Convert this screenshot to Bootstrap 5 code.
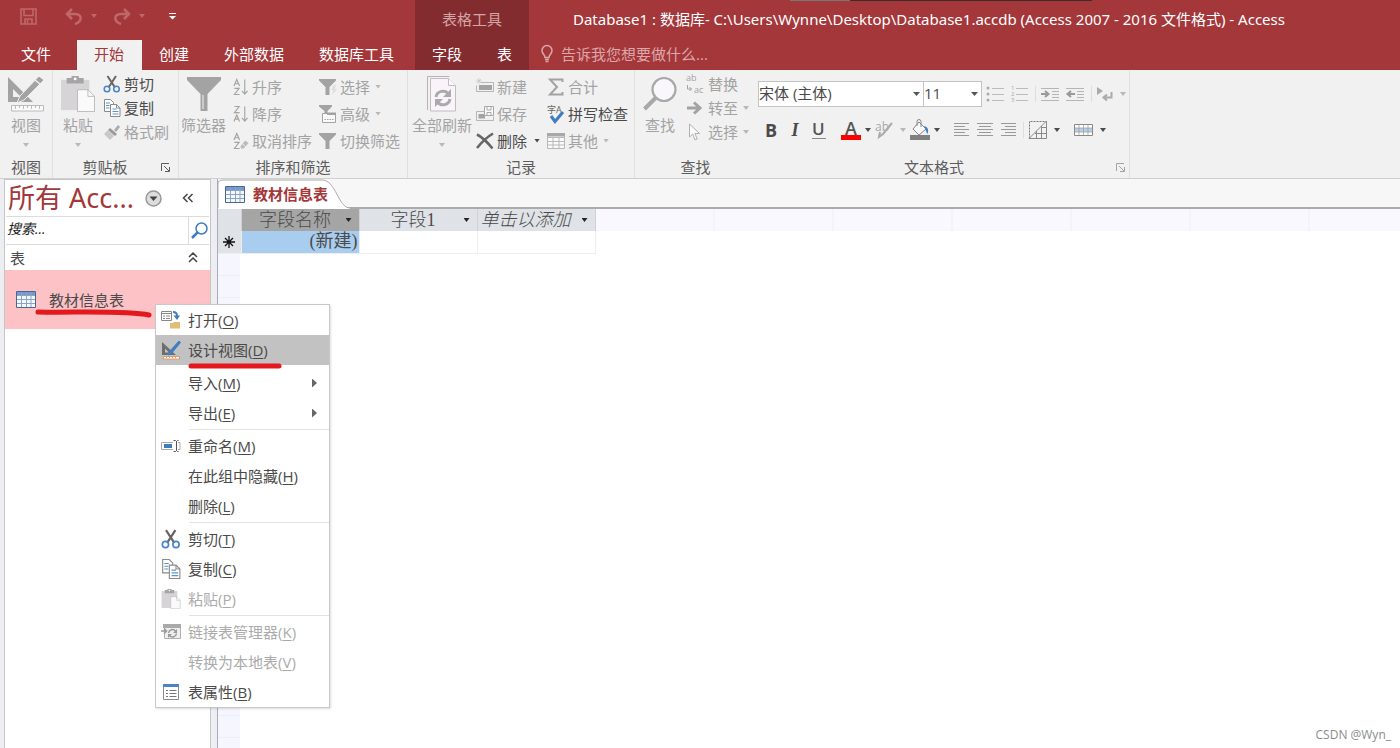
<!DOCTYPE html>
<html lang="zh-CN">
<head>
<meta charset="utf-8">
<meta name="viewport" content="width=device-width, initial-scale=1">
<title>Database1 - Access</title>
<link href="https://cdn.jsdelivr.net/npm/bootstrap@5.3.0/dist/css/bootstrap.min.css" rel="stylesheet">
<style>
:root{--brand:#a4373a;--ink:#4a4a4a;--muted:#a3a3a3;--line:#dcdcdc}
body{font-family:"Open Sans","Noto Sans CJK SC",sans-serif;font-size:15px;line-height:20px;color:var(--ink);background:#fff}
button{background:none;border:0;padding:0;color:inherit;line-height:20px;white-space:nowrap}
svg{display:block;flex:none;overflow:visible}
/* title bar */
.titlebar{background:var(--brand);color:#fff}
.qat,.title-row{height:40px}
.title-row{padding-bottom:2px}
.tabs-row{height:30px}
.left-head{width:415px}
.qat{padding:0 0 8px 20px;color:#c0676a}
.qmore{margin-left:20px;color:#fff}
.tab-link{color:#fff;text-decoration:none;height:30px;padding:4px 18px 6px 17px;white-space:nowrap}
.tab-link.current{background:#f1f1f1;color:var(--brand)}
.context-head{width:114px;background:#832c2f;color:#d4a4a6}
.title-text{font-family:"Noto Sans","Noto Sans CJK SC",sans-serif;padding-left:44px}
.tell{color:#dba7a9;padding-bottom:2px}
.top-edge{height:1px;width:302px;left:790px;background:linear-gradient(90deg,#777 20%,#3c2c2c 20%)}
/* ribbon */
.ribbon{background:#f1f1f1;border-bottom:1px solid #cfcfcf;height:109px}
.rgroup{border-right:1px solid #e0e0e0;color:var(--ink)}
.rbody{height:87px;padding-top:2px}
.rlabel{height:20px;color:#5c5c5c}
.off{color:var(--muted)}
.off .caret{color:#b8b8b8}
.big-btn{padding-top:4px}
.big-btn svg.ico{height:36px}
.big-btn span{margin-top:3px}
.toolcol>button{display:flex;align-items:center;gap:3px}
.toolcol .caret{margin-left:2px}
.r24>button{height:24px}
.r27{padding-top:1px}
.r27>button{height:27px}
.caret{width:6px;height:4px;background:currentColor;clip-path:polygon(0 0,100% 0,50% 100%);flex:none;display:inline-block}
.w-view{width:53px}.w-clip{width:126px}.w-sort{width:229px}.w-rec{width:227px}.w-find{width:121px}.w-text{width:374px}
.w-sort .rbody{padding-left:2px;gap:7px}
.w-text .rbody{padding-top:11px}
.combo{appearance:none;height:26px;border:1px solid #c4c4c4;border-radius:0;color:var(--ink);padding:0 2px 2px 0;line-height:20px;
background:#fff url("data:image/svg+xml,%3Csvg xmlns='http://www.w3.org/2000/svg' width='7' height='4'%3E%3Cpath d='M0 0h7L3.5 4z' fill='%23555'/%3E%3C/svg%3E") no-repeat right 3px center}
.combo-font{width:166px;margin-left:2px}.combo-size{width:59px;margin-left:-1px}
.vr-lite{width:1px;height:16px;background:#dedede;margin:0 5px 0 7px}
.gap-s{gap:7px}
.ml-s{margin-left:7px}
.ml-l{margin-left:14px}
.row-two{padding-left:7px}
.fmt{font-weight:700;font-size:18px;width:16px}
/* navigation pane */
.workspace{background:#eceef1}
.navpane{width:207px;margin-left:4px;background:#fff;border:1px solid #c6c6c6;border-width:1px 1px 0 1px}
.nav-title{height:36px;padding-left:3px}
.nav-title h1{font-family:"Noto Sans","Noto Sans CJK SC",sans-serif;font-size:27px;line-height:36px;color:var(--brand);font-weight:400}
.searchrow{height:29px;border-top:1px solid var(--line);border-bottom:1px solid var(--line);margin:0 1px}
.searchrow input{border:0;outline:0;background:none;font-style:italic;font-size:14px;padding:0 0 4px 1px;width:182px}
.searchrow input::placeholder{color:#222;opacity:1}
.searchrow button{width:21px;border-left:1px solid var(--line)}
.nav-group{height:25px;padding:0 12px 0 5px}
.nav-item-row{height:59px;background:#fcc2c5}
.nav-item-row a{color:var(--ink);text-decoration:none;padding-left:11px;height:59px;gap:13px}
.stroke-a{left:30px;top:38px}
.stroke-b{left:32px;top:28px}
/* context menu */
.ctx{left:150px;top:34px;width:175px;background:#fff;border:1px solid #c8c8c8;box-shadow:1px 1px 2px #0002;z-index:5}
.ctx button{display:flex;align-items:center;height:30px;width:100%;padding-left:5px;text-align:left}
.ctx svg.ico{width:20px;height:20px;margin-right:7px}
.ctx .noico{padding-left:32px}
.ctx .hot{background:#c2c2c2}
.ctx .rule{height:3px;padding-top:1px}
.ctx .rule.line::before{content:"";display:block;height:1px;background:#e2e2e2;margin-left:33px}
.ctx .disabled-item{color:#ababab}
.ctx u{text-underline-offset:2px}
.sub{width:5px;height:9px;background:#666;clip-path:polygon(0 0,100% 50%,0 100%);margin-left:auto;margin-right:12px}
/* document area */
.doc{margin-left:6px;border-left:1px solid #aab;background:#fff}
.tabstrip{height:30px;background:#f7f7f7;border-bottom:2px solid #ababab}
.doctab{height:30px;width:130px;color:var(--brand);font-weight:700}
.doctab .shape{left:0;top:0}
.sheet{font-family:"Liberation Serif","Noto Sans CJK SC",serif;font-size:18px;line-height:22px;table-layout:fixed;width:100%;color:#4a4a4a}
.sheet th{font-weight:300;height:22px;padding:0;background:#dfe2e6;border-right:1px solid #d0d0d6;white-space:nowrap}
.sheet td{height:22px;padding:0;border-right:1px solid #eee;border-bottom:1px solid #eee;line-height:21px}
.sheet .c-sel{width:23px}.sheet .c-data{width:118px}
.sheet .selcol{background:#a5a5a5}
.sheet .newcell{background:#a9cdee;text-align:right;padding-right:1px}
.sheet .rowsel{background:#dfe2e6;color:#111;text-align:center}
.sheet th.filler{background:repeating-linear-gradient(90deg,#f8f8fe 0 118px,#eeeef6 118px 119px);border:0}
.sheet td.filler{border:0}
.hcell{padding:0 7px 0 3px}
.gutter{width:22px;background:repeating-linear-gradient(#f6f7fe 0 21px,#eceef8 21px 22px)}
.credit{right:9px;bottom:3px;font-size:12px;color:#8c8c8c}
</style>
</head>
<body class="d-flex flex-column min-vh-100 position-relative">

<svg width="0" height="0" class="position-absolute" aria-hidden="true">
  <defs>
    <symbol id="i-scissors" viewBox="0 0 18 18"><path d="M4.500 1 L12 12.500 M13 1 L5.500 12.500" stroke="#666" stroke-width="2" fill="none"/><g fill="none" stroke="#4a86c5" stroke-width="1.500"><circle cx="4" cy="14" r="2.800"/><circle cx="13.500" cy="14" r="2.800"/></g></symbol>
    <symbol id="i-copy" viewBox="0 0 18 18"><g fill="#fff" stroke="#8a8a8a"><path d="M1.500.5h6l3 3v9h-9z"/><path d="M7.500 5.500h6l3.500 3.500v8.500h-9.500z"/><path d="M13.500 5.500v3.500h3.500" fill="none"/></g><path d="M3 4h4M3 6.500h3.500M3 9h3.500M9.500 10h4M9.500 12.500h6M9.500 15h6" stroke="#5b95cc"/></symbol>
    <symbol id="i-pasteoff" viewBox="0 0 36 38"><path d="M0 4h30v32H0z" fill="#d6d4d6"/><path d="M6 2h5a4 4 0 0 1 8 0h5v6H6z" fill="#a5a5a5"/><circle cx="15" cy="3" r="1.500" fill="#fff"/><path d="M17.500 14.500h11l7 7v16h-18z" fill="#fafafa" stroke="#b9b9b9"/><path d="M28.500 14.500v7h7" fill="none" stroke="#b9b9b9"/></symbol>
    <symbol id="i-design" viewBox="0 0 36 36"><path d="M0 1 L25 26 H0z M5 13v8h8z" fill="currentColor" fill-rule="evenodd"/><path d="M31 0l5 4-20 20-7 3 3-7z" fill="currentColor" stroke="#f1f1f1" stroke-width="1"/><path d="M27 4l5 4" stroke="#f1f1f1" stroke-width="1.500"/><path d="M3.500 29.500h32v5.500h-32z" fill="#fafafa" stroke="#bbb"/><path d="M7.500 30v3M11.500 30v2M15.500 30v3M19.500 30v2M23.500 30v3M27.500 30v2M31.500 30v3" stroke="#bbb"/></symbol>
    <symbol id="i-design-c" viewBox="0 0 20 20"><path d="M1 2l14 13H1z M4 8.500v4h4z" fill="#6e6e6e" fill-rule="evenodd"/><path d="M18 1l1.500 1.500L10 14l-3 1 1-3z" fill="#3f7fc0" stroke="#3f7fc0"/><path d="M2.500 16.500h16v2.500h-16z" fill="#fff" stroke="#dd9d6b"/><path d="M5.500 17v1M8.500 17v1M11.500 17v1M14.500 17v1" stroke="#dd9d6b"/></symbol>
    <symbol id="i-funnel" viewBox="0 0 34 34"><path d="M0 0h34v3L20.500 17v17h-7V17L0 3z" fill="currentColor"/><path d="M16 18v14" stroke="#ccc" stroke-width="2"/></symbol>
    <symbol id="i-az" viewBox="0 0 17 18"><g stroke="currentColor" fill="none" stroke-width="1.200"><path d="M1 8 L4 1 L7 8 M2 5.500h4M1.500 10.500h5L1.500 17h5.500"/><path d="M12.500 1v15M9.500 13l3 3.500 3-3.500"/></g></symbol>
    <symbol id="i-za" viewBox="0 0 17 18"><g stroke="currentColor" fill="none" stroke-width="1.200"><path d="M1.500 1h5L1.500 7.500h5.500M1 17l3-7 3 7M2 14.500h4"/><path d="M12.500 1v15M9.500 13l3 3.500 3-3.500"/></g></symbol>
    <symbol id="i-azclear" viewBox="0 0 17 18"><path d="M1 8 L4 1 L7 8 M2 5.500h4M1.500 10.500h5L1.500 17h5.500" stroke="currentColor" fill="none" stroke-width="1.200"/><path d="M13 8.500l3.500 2.500-5 6H8.500l-.5-2.500z" fill="#bbb"/><path d="M10 12l3.500 3" stroke="#f1f1f1"/></symbol>
    <symbol id="i-fsel" viewBox="0 0 18 18"><path d="M0 1h17v1.500L10.500 9v8h-4V9L0 2.500z" fill="currentColor"/><path d="M15 7l-3 5h2.500L13 17l5-6h-2.500L17 7z" fill="#ddd"/></symbol>
    <symbol id="i-fadv" viewBox="0 0 18 18"><path d="M0 0h13v1.500L8.500 6v4h-3V6L0 1.500z" fill="currentColor"/><path d="M3.500 8.500h13v9h-13z" fill="#fafafa" stroke="currentColor"/><path d="M8 7.500h9V10H8z" fill="currentColor"/><path d="M5.500 14.500h9" stroke="currentColor" stroke-dasharray="1.500 1"/></symbol>
    <symbol id="i-ftog" viewBox="0 0 18 18"><path d="M0 1h17v1.500L10.500 9v8h-4V9L0 2.500z" fill="currentColor"/></symbol>
    <symbol id="i-refresh" viewBox="0 0 30 36"><path d="M.5 34V.5h22" fill="none" stroke="#b5b5b5"/><path d="M3.500 2.500h18l7 7v25.500h-25z" fill="#faf4fa" stroke="#c0bcc0"/><path d="M21.500 2.500v7h7" fill="#fff" stroke="#c0bcc0"/><path d="M9 21a7 7 0 0 1 12.500-3M23 23a7 7 0 0 1-12.500 3" fill="none" stroke="#aaa" stroke-width="3"/><path d="M24 13v8h-8zM8 31v-8h8z" fill="#aaa"/></symbol>
    <symbol id="i-new" viewBox="0 0 18 18"><path d="M5 4.500h12.500v9H.5v-6" fill="none" stroke="#b5b5b5"/><path d="M3 7h13v5H3z" fill="#a3a3a3"/><path d="M3 0v6M0 3h6M1 1l4 4M5 1L1 5" stroke="#c4c4c4" stroke-width=".7"/></symbol>
    <symbol id="i-saverec" viewBox="0 0 18 18"><path d="M9 6.500H.5v9h17v-4" fill="none" stroke="#b5b5b5"/><path d="M2.500 9H9v4.500H2.500z" fill="#a3a3a3"/><path d="M8.500 1.500h9v9h-9z" fill="#fafafa" stroke="#a8a8a8"/><path d="M11 2v3h4V2M11 10V7.500h4V10" stroke="#a8a8a8" fill="none"/></symbol>
    <symbol id="i-x" viewBox="0 0 18 18"><path d="M1 2.500C6 5 12 11 16.500 16.500M17 1.500C11 5 5 11 1 16" stroke="#666" stroke-width="2.600" fill="none"/></symbol>
    <symbol id="i-sigma" viewBox="0 0 18 18"><path d="M15.500 4V1.500H3L10 9l-7 7.500h12.500V14" fill="none" stroke="#a3a3a3" stroke-width="2"/></symbol>
    <symbol id="i-othertab" viewBox="0 0 18 18"><path d="M.5 1.500h17v15H.5zM.5 5.500h17M.5 9.500h17M.5 13h17M6 5v11.500M12 5v11.500" fill="#fafafa" stroke="#b9b9b9"/><path d="M0 1h18v3.500H0z" fill="#a8a8a8"/></symbol>
    <symbol id="i-check" viewBox="0 0 18 20"><path d="M4 12l4 5.500L16 8" stroke="#3f7dbd" stroke-width="3" fill="none"/></symbol>
    <symbol id="i-mag" viewBox="0 0 34 34"><circle cx="21" cy="12.500" r="11.500" fill="#faf7fc" stroke="#a8a8a8" stroke-width="2.200"/><path d="M12.500 21L1.500 32" stroke="#a8a8a8" stroke-width="4"/></symbol>
    <symbol id="i-goto" viewBox="0 0 20 18"><path d="M2 9h12M9 3.500L15 9l-6 5.500" stroke="#a3a3a3" stroke-width="3" fill="none"/></symbol>
    <symbol id="i-cursor" viewBox="0 0 20 18"><path d="M4.500 1v13l3.200-3 2.300 6 2.300-1-2.400-5.500h4.600z" fill="#fafafa" stroke="#b0b0b0"/></symbol>
    <symbol id="i-brush" viewBox="0 0 18 18"><path d="M15 2l2 2-4 5-2-2z" fill="#aaa"/><path d="M7 5l7 6-2 2-7-6z" fill="#999"/><path d="M5 7l6 6-4 4-6-6z" fill="#c9c9c9"/></symbol>
    <symbol id="i-table" viewBox="0 0 20 17"><path d="M.5.500h19v16H.5z" fill="#f4f8fc" stroke="#4a6692"/><path d="M1 1h18v3H1z" fill="#7799cd"/><path d="M5.500 1v15M10.500 1v15M15 1v15M1 4.500h18M1 8.500h18M1 12.500h18" stroke="#8aa5c4"/></symbol>
    <symbol id="i-open" viewBox="0 0 20 20"><path d="M.5 1.500h10v9H.5z" fill="#fff" stroke="#888"/><path d="M.5 3.500h10M2 6h2M5 6h4M2 8.500h2M5 8.500h4" stroke="#888"/><path d="M12 2c3 0 4 2 4 4" fill="none" stroke="#3f7dbd" stroke-width="2"/><path d="M12.500 5.500H19L16 10z" fill="#3f7dbd"/><path d="M9 13h3l1-1h6v6.500H9z" fill="#e0be78"/></symbol>
    <symbol id="i-rename" viewBox="0 0 20 20"><path d="M12 6.500H.5v7H12M17 6.500h2v7h-2" fill="none" stroke="#aaa"/><path d="M3 8h8v4H3z" fill="#3f7dbd"/><path d="M12.500 4.500h2l1 1 1-1h1M12.500 15.500h2l1-1 1 1h1M15.500 5v10" stroke="#555" fill="none"/></symbol>
    <symbol id="i-linkmgr" viewBox="0 0 20 20"><path d="M3.500 3.500h16v13h-16z" fill="#eee" stroke="#b0b0b0"/><path d="M2 2h18v4H2z" fill="#aaa"/><path d="M0 9h5M3 6.500L5.500 9 3 11.500" stroke="#999" fill="none" stroke-width="1.500"/><path d="M7.500 11a4 4 0 0 1 7-2M15.500 11.500a4 4 0 0 1-7 2" stroke="#999" fill="none" stroke-width="1.500"/><path d="M16 7v4h-4zM7 16v-4h4z" fill="#999"/></symbol>
    <symbol id="i-props" viewBox="0 0 20 20"><path d="M2.500 2.500h15v15h-15z" fill="#fff" stroke="#8a8a8a"/><path d="M2 2h16v3H2z" fill="#4a86c5"/><path d="M5 8.500h2M5 11.500h2M5 14.500h2M8.500 8.500h7M8.500 11.500h7M8.500 14.500h7" stroke="#777"/></symbol>
    <symbol id="i-launch" viewBox="0 0 9 9"><path d="M.5 8V.5H8M3 3l5 5M8.500 4v4.500H4" fill="none" stroke="currentColor"/></symbol>
  </defs>
</svg>

<header class="titlebar d-flex position-relative">
  <div class="top-edge position-absolute"></div>
  <div class="left-head flex-shrink-0">
    <div class="qat d-flex align-items-center">
      <button type="button" aria-label="保存"><svg width="17" height="17" viewBox="0 0 17 17"><path d="M1 1h15v15H1zM4 1v6.500h9V1M5 16v-5h7v5M7.500 12v3" fill="none" stroke="currentColor" stroke-width="1.600"/></svg></button>
      <button type="button" class="d-flex align-items-center gap-2 ms-4 ps-1" aria-label="撤消"><svg width="18" height="17" viewBox="0 0 18 17"><path d="M7 1L2 6l5 5M2 6h8c8 0 7 8 0 10" fill="none" stroke="currentColor" stroke-width="2.500"/></svg><i class="caret"></i></button>
      <button type="button" class="d-flex align-items-center gap-2 ms-3" aria-label="恢复"><svg width="18" height="17" viewBox="0 0 18 17"><path d="M11 1l5 5-5 5M16 6H8C0 6 1 14 8 16" fill="none" stroke="currentColor" stroke-width="2.500"/></svg><i class="caret"></i></button>
      <button type="button" class="qmore ps-1" aria-label="自定义快速访问工具栏"><svg width="7" height="7" viewBox="0 0 7 7"><path d="M0 .5h7" stroke="currentColor"/><path d="M0 3h7L3.500 6.500z" fill="currentColor"/></svg></button>
    </div>
    <nav class="tabs-row d-flex ps-1">
      <a class="tab-link me-2" href="#">文件</a>
      <a class="tab-link current" href="#">开始</a>
      <a class="tab-link" href="#">创建</a>
      <a class="tab-link" href="#">外部数据</a>
      <a class="tab-link" href="#">数据库工具</a>
    </nav>
  </div>
  <div class="context-head flex-shrink-0 text-center">
    <div class="title-row d-flex align-items-center justify-content-center">表格工具</div>
    <nav class="tabs-row d-flex"><a class="tab-link" href="#">字段</a><a class="tab-link" href="#">表</a></nav>
  </div>
  <div class="flex-grow-1">
    <div class="title-row title-text d-flex align-items-center"><span class="text-nowrap">Database1 : 数据库- C:\Users\Wynne\Desktop\Database1.accdb (Access 2007 - 2016 文件格式) - Access</span></div>
    <div class="tabs-row d-flex align-items-center tell ps-2 ms-1">
      <svg width="12" height="18" viewBox="0 0 12 18"><path d="M4 12.500C4 9.500 1 9 1 5.500a5 5 0 0 1 10 0c0 3.500-3 4-3 7zM4 14.500h4M4.500 16.500h3" fill="none" stroke="currentColor" stroke-width="1.500"/></svg>
      <button type="button" class="ps-1 ms-1">告诉我您想要做什么...</button>
    </div>
  </div>
</header>

<section class="ribbon d-flex" aria-label="功能区">
  <div class="rgroup w-view">
    <div class="rbody"><button type="button" class="big-btn off w-100 d-flex flex-column align-items-center"><svg class="ico" width="36"><use href="#i-design"/></svg><span>视图</span><i class="caret mt-2"></i></button></div>
    <div class="rlabel text-center">视图</div>
  </div>

  <div class="rgroup w-clip">
    <div class="rbody d-flex ps-2">
      <button type="button" class="big-btn off d-flex flex-column align-items-center"><svg class="ico" width="34"><use href="#i-pasteoff"/></svg><span>粘贴</span><i class="caret mt-2"></i></button>
      <div class="toolcol r24 d-flex flex-column ms-2">
        <button type="button"><svg width="18" height="18"><use href="#i-scissors"/></svg>剪切</button>
        <button type="button"><svg width="18" height="18"><use href="#i-copy"/></svg>复制</button>
        <button type="button" class="off"><svg width="18" height="18"><use href="#i-brush"/></svg>格式刷</button>
      </div>
    </div>
    <div class="rlabel d-flex"><span class="flex-grow-1 text-center">剪贴板</span><button type="button" class="pe-1 me-1 ps-1" aria-label="剪贴板选项"><svg width="9" height="9"><use href="#i-launch"/></svg></button></div>
  </div>

  <div class="rgroup w-sort">
    <div class="rbody d-flex">
      <button type="button" class="big-btn off d-flex flex-column align-items-center"><svg class="ico" width="34"><use href="#i-funnel"/></svg><span>筛选器</span></button>
      <div class="toolcol r27 off d-flex flex-column">
        <button type="button"><svg width="16" height="18"><use href="#i-az"/></svg>升序</button>
        <button type="button"><svg width="16" height="18"><use href="#i-za"/></svg>降序</button>
        <button type="button"><svg width="16" height="18"><use href="#i-azclear"/></svg>取消排序</button>
      </div>
      <div class="toolcol r27 off d-flex flex-column">
        <button type="button"><svg width="18" height="18"><use href="#i-fsel"/></svg>选择<i class="caret"></i></button>
        <button type="button"><svg width="18" height="18"><use href="#i-fadv"/></svg>高级<i class="caret"></i></button>
        <button type="button"><svg width="18" height="18"><use href="#i-ftog"/></svg>切换筛选</button>
      </div>
    </div>
    <div class="rlabel text-center">排序和筛选</div>
  </div>

  <div class="rgroup w-rec">
    <div class="rbody d-flex">
      <button type="button" class="big-btn off d-flex flex-column align-items-center ms-1"><svg class="ico" width="30"><use href="#i-refresh"/></svg><span>全部刷新</span><i class="caret mt-2"></i></button>
      <div class="toolcol r27 d-flex flex-column ms-1">
        <button type="button" class="off"><svg width="18" height="18"><use href="#i-new"/></svg>新建</button>
        <button type="button" class="off"><svg width="18" height="18"><use href="#i-saverec"/></svg>保存</button>
        <button type="button"><svg width="18" height="18"><use href="#i-x"/></svg>删除<i class="caret ms-1"></i></button>
      </div>
      <div class="toolcol r27 d-flex flex-column ml-s">
        <button type="button" class="off"><svg width="18" height="18"><use href="#i-sigma"/></svg>合计</button>
        <button type="button"><svg width="18" height="20"><text x="0" y="9" font-size="9" fill="#666">字A</text><use href="#i-check"/></svg>拼写检查</button>
        <button type="button" class="off"><svg width="18" height="18"><use href="#i-othertab"/></svg>其他<i class="caret"></i></button>
      </div>
    </div>
    <div class="rlabel text-center">记录</div>
  </div>

  <div class="rgroup w-find border-0">
    <div class="rbody d-flex off ps-2">
      <button type="button" class="big-btn d-flex flex-column align-items-center"><svg class="ico" width="34"><use href="#i-mag"/></svg><span>查找</span></button>
      <div class="toolcol r24 d-flex flex-column ms-2">
        <button type="button"><svg width="20" height="20"><text x="1" y="7" font-size="9" fill="#a3a3a3">ab</text><text x="9" y="19" font-size="9" fill="#a3a3a3">ac</text><path d="M2.500 11v4h4M4.500 13l2 2-2 2" fill="none" stroke="#a3a3a3"/></svg>替换</button>
        <button type="button"><svg width="20" height="18"><use href="#i-goto"/></svg>转至<i class="caret"></i></button>
        <button type="button"><svg width="20" height="18"><use href="#i-cursor"/></svg>选择<i class="caret"></i></button>
      </div>
    </div>
    <div class="rlabel text-center">查找</div>
  </div>

  <div class="rgroup w-text">
    <div class="rbody">
      <div class="d-flex align-items-center off">
        <select class="combo combo-font" aria-label="字体"><option>宋体 (主体)</option></select>
        <select class="combo combo-size" aria-label="字号"><option>11</option></select>
        <button type="button" class="ms-1" aria-label="项目符号"><svg width="18" height="18"><g fill="#aaa"><circle cx="2" cy="3" r="1.500"/><circle cx="2" cy="9" r="1.500"/><circle cx="2" cy="15" r="1.500"/></g><path d="M6 3.500h12M6 9.500h12M6 15.500h12" stroke="#bbb"/></svg></button>
        <button type="button" class="ml-s" aria-label="编号"><svg width="17" height="18"><g fill="#aaa" font-size="6"><text x="0" y="5">1</text><text x="0" y="11">2</text><text x="0" y="17">3</text></g><path d="M5 3.500h12M5 9.500h12M5 15.500h12" stroke="#bbb"/></svg></button>
        <span class="vr-lite"></span>
        <button type="button" aria-label="增加缩进"><svg width="18" height="16"><path d="M0 2.500h18M11 5.500h7M11 8.500h7M11 11.500h7M0 14.500h18" stroke="#b5b5b5"/><path d="M0 8h7M4 5l3.500 3L4 11" stroke="#999" stroke-width="2" fill="none"/></svg></button>
        <button type="button" class="ml-s" aria-label="减少缩进"><svg width="18" height="16"><path d="M0 2.500h18M11 5.500h7M11 8.500h7M11 11.500h7M0 14.500h18" stroke="#b5b5b5"/><path d="M2 8h7M5 5L1.500 8 5 11" stroke="#999" stroke-width="2" fill="none"/></svg></button>
        <span class="vr-lite"></span>
        <button type="button" class="d-flex align-items-center gap-s" aria-label="文字方向"><svg width="16" height="16"><path d="M0 1l6 4-6 4z" fill="#aaa"/><path d="M14.500 6v5.500H7M10 8.500l-3.500 3 3.500 3" stroke="#aaa" stroke-width="2" fill="none"/></svg><i class="caret"></i></button>
      </div>
      <div class="row-two d-flex align-items-center mt-2 pt-1">
        <button type="button" class="fmt" aria-label="加粗">B</button>
        <button type="button" class="fmt ms-2 fst-italic" style="font-family:'Liberation Serif',serif" aria-label="倾斜">I</button>
        <button type="button" class="fmt ms-2" aria-label="下划线"><svg width="16" height="20"><text x="1" y="15" font-size="17" font-weight="600" fill="#555">U</text><path d="M1 18.500h14" stroke="#888"/></svg></button>
        <button type="button" class="ml-l d-flex align-items-center gap-1" aria-label="字体颜色"><svg width="20" height="22"><text x="4" y="16" font-size="18" font-weight="600" fill="#555">A</text><path d="M0 16h20v5H0z" fill="#f00"/></svg><i class="caret"></i></button>
        <button type="button" class="ms-1 off d-flex align-items-center gap-s" aria-label="文本突出显示颜色"><svg width="18" height="20"><text x="0" y="11" font-size="12" fill="#aaa">ab</text><path d="M17 3L8 14l-4 3 1-5" stroke="#aaa" stroke-width="2" fill="none"/></svg><i class="caret"></i></button>
        <button type="button" class="ms-1 d-flex align-items-center gap-1" aria-label="背景色"><svg width="20" height="22"><path d="M9 3l7 7-7 6-6-6z" fill="#fafafa" stroke="#888"/><path d="M7 7V2.500a2 2 0 0 1 4 0V8" fill="none" stroke="#888"/><path d="M14 7c4 1 5 4 3.500 8-1-1-1.500-4-3.500-8" fill="#3f7dbd"/><path d="M0 16h20v5H0z" fill="#808080"/></svg><i class="caret"></i></button>
        <button type="button" class="ml-l" aria-label="左对齐"><svg width="15" height="16"><path d="M0 1.500h15M0 4.500h11M0 7.500h15M0 10.500h11M0 13.500h15" stroke="#999"/></svg></button>
        <button type="button" class="ms-2" aria-label="居中"><svg width="16" height="16"><path d="M0 1.500h16M2 4.500h12M0 7.500h16M2 10.500h12M0 13.500h16" stroke="#999"/></svg></button>
        <button type="button" class="ms-2" aria-label="右对齐"><svg width="15" height="16"><path d="M0 1.500h15M4 4.500h11M0 7.500h15M4 10.500h11M0 13.500h15" stroke="#999"/></svg></button>
        <span class="vr-lite"></span>
        <button type="button" class="d-flex align-items-center gap-s" aria-label="网格线"><svg width="18" height="18"><path d="M.5 17.500V.5h17" fill="none" stroke="#777" stroke-dasharray="2 1"/><path d="M17.500 0v17.500H0L17.500 0M12.500 5v12.500M7.500 10v7.500M12 6.500h5M6 12.500h11" fill="none" stroke="#888"/></svg><i class="caret"></i></button>
        <button type="button" class="ml-l d-flex align-items-center gap-s" aria-label="可选行颜色"><svg width="19" height="12"><path d="M.5.500h18v11H.5z" fill="#fff" stroke="#888"/><path d="M1 4h17v4H1z" fill="#b9cfea"/><path d="M5 1v10M9.500 1v10M14 1v10M1 4h17M1 8h17" stroke="#999" stroke-width=".7"/></svg><i class="caret"></i></button>
      </div>
    </div>
    <div class="rlabel d-flex"><span class="flex-grow-1 text-center">文本格式</span><button type="button" class="off pe-1 ps-1" aria-label="文本格式选项"><svg width="9" height="9"><use href="#i-launch"/></svg></button></div>
  </div>
</section>

<main class="workspace flex-grow-1 d-flex">
  <aside class="navpane flex-shrink-0">
    <div class="nav-title d-flex align-items-center">
      <h1 class="m-0 text-nowrap">所有 Acc...</h1>
      <button type="button" class="ms-auto me-3" aria-label="浏览类别"><svg width="17" height="17"><circle cx="8.500" cy="8.500" r="7.500" fill="#ddd" stroke="#999" stroke-width="1.500"/><path d="M4.500 6.500h8l-4 4.500z" fill="#444"/></svg></button>
      <button type="button" class="me-3 ms-1" aria-label="折叠"><svg width="12" height="10"><path d="M5.500 1l-4 4 4 4M10.500 1l-4 4 4 4" fill="none" stroke="#444" stroke-width="1.500"/></svg></button>
    </div>
    <div class="searchrow d-flex">
      <input type="text" placeholder="搜索..." aria-label="搜索">
      <button type="button" aria-label="搜索" class="d-flex align-items-center justify-content-center"><svg width="17" height="17"><circle cx="10.500" cy="6.500" r="5.500" fill="none" stroke="#3f7dbd" stroke-width="1.500"/><path d="M6.500 10.500L1 16" stroke="#3f7dbd" stroke-width="2.500"/></svg></button>
    </div>
    <div class="nav-group d-flex align-items-center justify-content-between"><span>表</span><button type="button" aria-label="折叠组"><svg width="10" height="11"><path d="M1 5l4-4 4 4M1 10l4-4 4 4" fill="none" stroke="#444" stroke-width="1.500"/></svg></button></div>
    <div class="nav-item-row position-relative">
      <a href="#" class="d-flex align-items-center"><svg width="20" height="17"><use href="#i-table"/></svg><span>教材信息表</span></a>
      <svg class="stroke-a position-absolute" width="118" height="12"><path d="M3 4C35 5 90 2 114 7" fill="none" stroke="#e3191e" stroke-width="5" stroke-linecap="round"/></svg>
      <div class="ctx position-absolute" role="menu">
        <button type="button"><svg class="ico"><use href="#i-open"/></svg>打开(<u>O</u>)</button>
        <button type="button" class="hot position-relative"><svg class="ico"><use href="#i-design-c"/></svg>设计视图(<u>D</u>)<svg class="stroke-b position-absolute" width="94" height="6"><path d="M3 3h88" stroke="#e3191e" stroke-width="5" stroke-linecap="round"/></svg></button>
        <div class="rule"></div>
        <button type="button" class="noico">导入(<u>M</u>)<i class="sub"></i></button>
        <button type="button" class="noico">导出(<u>E</u>)<i class="sub"></i></button>
        <div class="rule line"></div>
        <button type="button"><svg class="ico"><use href="#i-rename"/></svg>重命名(<u>M</u>)</button>
        <button type="button" class="noico">在此组中隐藏(<u>H</u>)</button>
        <button type="button" class="noico">删除(<u>L</u>)</button>
        <div class="rule line"></div>
        <button type="button"><svg class="ico"><use href="#i-scissors"/></svg>剪切(<u>T</u>)</button>
        <button type="button"><svg class="ico"><use href="#i-copy"/></svg>复制(<u>C</u>)</button>
        <button type="button" class="disabled-item"><svg class="ico"><use href="#i-pasteoff"/></svg>粘贴(<u>P</u>)</button>
        <div class="rule line"></div>
        <button type="button" class="disabled-item"><svg class="ico"><use href="#i-linkmgr"/></svg>链接表管理器(<u>K</u>)</button>
        <button type="button" class="disabled-item noico">转换为本地表(<u>V</u>)</button>
        <button type="button"><svg class="ico"><use href="#i-props"/></svg>表属性(<u>B</u>)</button>
      </div>
    </div>
  </aside>

  <section class="doc flex-grow-1 d-flex flex-column">
    <div class="tabstrip">
      <div class="doctab position-relative d-flex align-items-center">
        <svg class="shape position-absolute" width="132" height="30"><path d="M0 30V5q0-4 5-4H104c14 0 16 28 28 28v1z" fill="#fff"/><path d="M0 29V5q0-4 5-4H104c14 0 16 28 28 28" fill="none" stroke="#ababab"/></svg>
        <svg width="20" height="17" class="ml-s position-relative"><use href="#i-table"/></svg><span class="ms-2 ps-0 position-relative text-nowrap">教材信息表</span>
      </div>
    </div>
    <table class="sheet">
      <colgroup><col class="c-sel"><col class="c-data"><col class="c-data"><col class="c-data"><col></colgroup>
      <thead><tr>
        <th></th>
        <th class="selcol"><div class="hcell d-flex align-items-center"><span class="flex-grow-1 text-center">字段名称</span><i class="caret text-dark"></i></div></th>
        <th><div class="hcell d-flex align-items-center"><span class="flex-grow-1 text-center">字段1</span><i class="caret text-dark"></i></div></th>
        <th><div class="hcell d-flex align-items-center"><span class="flex-grow-1 fst-italic">单击以添加</span><i class="caret text-dark"></i></div></th>
        <th class="filler"></th>
      </tr></thead>
      <tbody><tr>
        <td class="rowsel"><svg width="12" height="12" class="mx-auto"><path d="M6 0v12M0 6h12M2 2l8 8M10 2l-8 8" stroke="#111" stroke-width="1.300"/></svg></td>
        <td class="newcell">(新建)</td><td></td><td></td><td class="filler"></td>
      </tr></tbody>
    </table>
    <div class="gutter flex-grow-1"></div>
  </section>
</main>
<div class="credit position-absolute">CSDN @Wyn_</div>

<script src="https://cdn.jsdelivr.net/npm/bootstrap@5.3.0/dist/js/bootstrap.bundle.min.js"></script>
</body>
</html>
